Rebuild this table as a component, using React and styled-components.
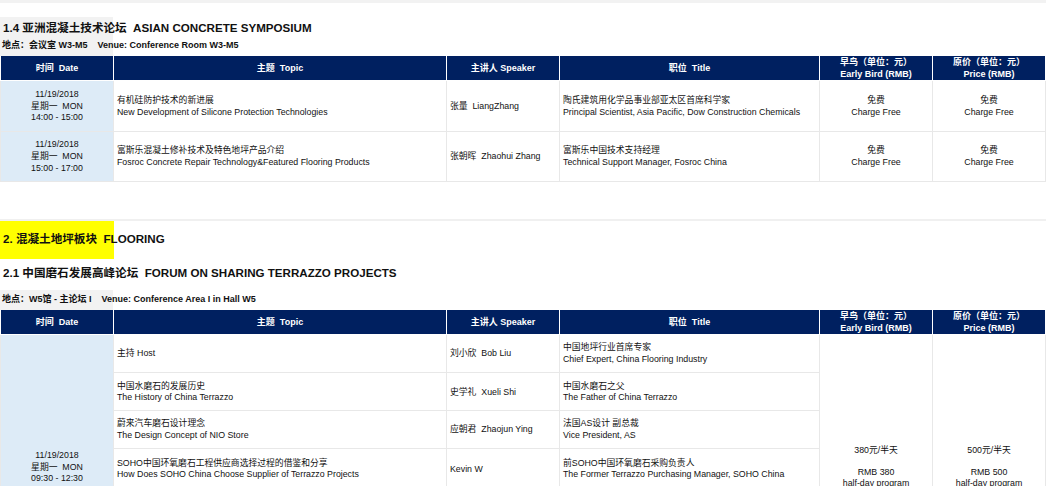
import React from 'react';
import styled, { createGlobalStyle } from 'styled-components';

const GlobalStyle = createGlobalStyle`
  html, body {
    margin: 0;
    padding: 0;
    background: #fff;
    overflow: hidden;
  }
  body {
    font-family: "Liberation Sans", Arial, "Noto Sans CJK SC", sans-serif;
    color: #111;
  }
`;

const NAVY = '#002060';
const GRID = '#e8e8e8';

const Page = styled.div`
  width: 1046px;
  display: flex;
  flex-direction: column;
`;

const TopEdge = styled.div`
  height: 3px;
  background: #f2f2f2;
`;

// grey tint that sits behind the first column of the heading area
const Block = styled.div`
  display: flex;
  flex-direction: column;
  margin-top: ${p => p.$mt || 0}px;
  padding-bottom: ${p => p.$pb || 0}px;
  background: ${p => p.$shade ? 'linear-gradient(to right, #f2f2f2 113px, transparent 113px)' : 'transparent'};
`;

const Heading = styled.div`
  height: ${p => p.$h}px;
  line-height: ${p => p.$h}px;
  padding-left: 3px;
  font-size: 11.6px;
  font-weight: 700;
  white-space: pre;
  color: #111;
`;

const Venue = styled.div`
  height: ${p => p.$h}px;
  line-height: ${p => p.$h}px;
  padding-left: 2px;
  font-size: 9px;
  font-weight: 700;
  white-space: pre;
`;

const PageBreak = styled.div`
  margin-top: 37px;
  height: 2px;
  background: #f0f0f0;
`;

const Banner = styled.div`
  height: 38px;
  line-height: 36px;
  font-size: 11.6px;
  font-weight: 700;
  white-space: pre;
  background: linear-gradient(to right, #ffff00 114px, transparent 114px);
  padding-left: 3px;
`;

const Table = styled.table`
  width: 1045px;
  table-layout: fixed;
  border-collapse: collapse;
`;

const HeadCell = styled.th`
  height: 24px;
  padding: 0;
  background: ${NAVY};
  color: #fff;
  border: 1px solid #fff;
  border-top: none;
  font-size: 9px;
  line-height: 12px;
  font-weight: 700;
  text-align: center;
  vertical-align: middle;
  white-space: pre;
`;

const Row = styled.tr`
  height: ${p => p.$h}px;
`;

const Cell = styled.td`
  padding: ${p => p.$top ? `${p.$top}px 3px 0` : '1px 3px 0'};
  border: 1px solid ${GRID};
  background: ${p => p.$date ? '#ddebf7' : '#fff'};
  font-size: 8.8px;
  line-height: ${p => p.$lh || 11.7}px;
  text-align: ${p => p.$center ? 'center' : 'left'};
  vertical-align: ${p => p.$top ? 'top' : 'middle'};
  white-space: pre;
  overflow: hidden;
`;

const Line = styled.div`
  min-height: 1em;
`;

const Lines = ({ items }) => items.map((t, i) => <Line key={i}>{t || '\u00a0'}</Line>);

const widths = [113, 333, 113, 260, 113, 113];

const Head = () => (
  <>
    <colgroup>
      {widths.map((w, i) => <col key={i} style={{ width: w }} />)}
    </colgroup>
    <thead>
      <tr>
        <HeadCell>时间  Date</HeadCell>
        <HeadCell>主题  Topic</HeadCell>
        <HeadCell>主讲人 Speaker</HeadCell>
        <HeadCell>职位  Title</HeadCell>
        <HeadCell><Lines items={['早鸟（单位：元）', 'Early Bird (RMB)']} /></HeadCell>
        <HeadCell><Lines items={['原价（单位：元）', 'Price (RMB)']} /></HeadCell>
      </tr>
    </thead>
  </>
);

const FREE = ['免费', 'Charge Free'];

const symposium = [
  {
    h: 51,
    date: ['11/19/2018', '星期一  MON', '14:00 - 15:00'],
    topic: ['有机硅防护技术的新进展', 'New Development of Silicone Protection Technologies'],
    speaker: '张量  LiangZhang',
    title: ['陶氏建筑用化学品事业部亚太区首席科学家', 'Principal Scientist, Asia Pacific, Dow Construction Chemicals'],
  },
  {
    h: 50,
    date: ['11/19/2018', '星期一  MON', '15:00 - 17:00'],
    topic: ['富斯乐混凝土修补技术及特色地坪产品介绍', 'Fosroc Concrete Repair Technology&Featured Flooring Products'],
    speaker: '张朝晖  Zhaohui Zhang',
    title: ['富斯乐中国技术支持经理', 'Technical Support Manager, Fosroc China'],
  },
];

const terrazzo = [
  {
    h: 38,
    topic: ['主持 Host'],
    speaker: '刘小欣  Bob Liu',
    title: ['中国地坪行业首席专家', 'Chief Expert, China Flooring Industry'],
  },
  {
    h: 38,
    topic: ['中国水磨石的发展历史', 'The History of China Terrazzo'],
    speaker: '史学礼  Xueli Shi',
    title: ['中国水磨石之父', 'The Father of China Terrazzo'],
  },
  {
    h: 37,
    topic: ['蔚来汽车磨石设计理念', 'The Design Concept of NIO Store'],
    speaker: '应朝君  Zhaojun Ying',
    title: ['法国AS设计 副总裁', 'Vice President, AS'],
  },
  {
    h: 41,
    topic: ['SOHO中国环氧磨石工程供应商选择过程的借鉴和分享', 'How Does SOHO China Choose Supplier of Terrazzo Projects'],
    speaker: 'Kevin W',
    title: ['前SOHO中国环氧磨石采购负责人', 'The Former Terrazzo Purchasing Manager, SOHO China'],
  },
];

const SymposiumTable = () => (
  <Table>
    <Head />
    <tbody>
      {symposium.map((r, i) => (
        <Row key={i} $h={r.h}>
          <Cell $date $center><Lines items={r.date} /></Cell>
          <Cell><Lines items={r.topic} /></Cell>
          <Cell>{r.speaker}</Cell>
          <Cell><Lines items={r.title} /></Cell>
          <Cell $center><Lines items={FREE} /></Cell>
          <Cell $center><Lines items={FREE} /></Cell>
        </Row>
      ))}
    </tbody>
  </Table>
);

const TerrazzoTable = () => (
  <Table>
    <Head />
    <tbody>
      {terrazzo.map((r, i) => (
        <Row key={i} $h={r.h}>
          {i === 0 && (
            <Cell rowSpan={terrazzo.length} $date $center $top={115}>
              <Lines items={['11/19/2018', '星期一  MON', '09:30 - 12:30']} />
            </Cell>
          )}
          <Cell><Lines items={r.topic} /></Cell>
          <Cell>{r.speaker}</Cell>
          <Cell><Lines items={r.title} /></Cell>
          {i === 0 && (
            <>
              <Cell rowSpan={terrazzo.length} $center $top={110} $lh={11}>
                <Lines items={['380元/半天', '', 'RMB 380', 'half-day program']} />
              </Cell>
              <Cell rowSpan={terrazzo.length} $center $top={110} $lh={11}>
                <Lines items={['500元/半天', '', 'RMB 500', 'half-day program']} />
              </Cell>
            </>
          )}
        </Row>
      ))}
    </tbody>
  </Table>
);

export default function App() {
  return (
    <Page>
      <GlobalStyle />
      <TopEdge />
      <Block $shade $mt={14} $pb={3}>
        <Heading $h={21}>1.4 亚洲混凝土技术论坛  ASIAN CONCRETE SYMPOSIUM</Heading>
        <Venue $h={15}>地点：会议室 W3-M5    Venue: Conference Room W3-M5</Venue>
      </Block>
      <SymposiumTable />

      <PageBreak />
      <Banner>2. 混凝土地坪板块  FLOORING</Banner>
      <Heading $h={28}>2.1 中国磨石发展高峰论坛  FORUM ON SHARING TERRAZZO PROJECTS</Heading>
      <Block $shade $mt={3} $pb={1}>
        <Venue $h={19}>地点：W5馆 - 主论坛 I    Venue: Conference Area I in Hall W5</Venue>
      </Block>
      <TerrazzoTable />
    </Page>
  );
}
